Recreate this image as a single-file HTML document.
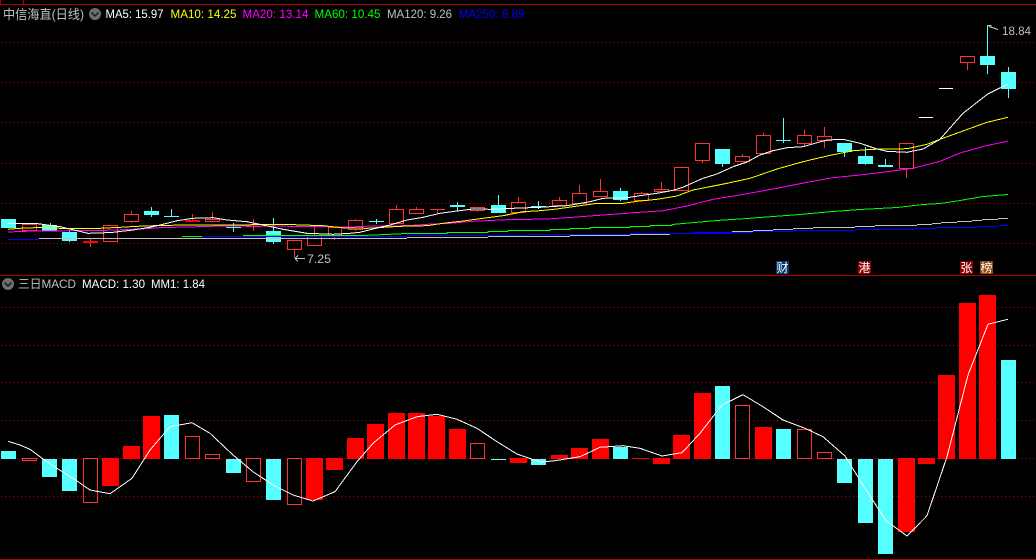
<!DOCTYPE html>
<html><head><meta charset="utf-8"><style>
html,body{margin:0;padding:0;background:#000;width:1036px;height:560px;overflow:hidden}
svg{display:block;position:absolute;left:0;top:0}
.l{fill:none;stroke-width:1;shape-rendering:crispEdges}
.t{font-family:"Liberation Sans","WenQuanYi Zen Hei",sans-serif;font-size:12px}
</style></head><body>
<svg width="1036" height="560" viewBox="0 0 1036 560" xmlns="http://www.w3.org/2000/svg">
<rect width="1036" height="560" fill="#000"/>
<!-- frame -->
<g shape-rendering="crispEdges" fill="#b00000">
<rect x="0" y="4" width="1036" height="1"/><rect x="0" y="275" width="1036" height="1"/><rect x="0" y="559" width="1036" height="1"/>
<rect x="0" y="0" width="1" height="4"/><rect x="23" y="0" width="1" height="4"/>
</g>
<!-- dotted grid -->
<path class="l" stroke="#c00000" stroke-dasharray="1 3" d="M1 42.5H1036M1 82.5H1036M1 122.5H1036M1 163.5H1036M1 203.5H1036M1 243.5H1036M1 307.5H1036M1 345.5H1036M1 382.5H1036M1 420.5H1036M1 458.5H1036M1 496.5H1036"/>
<!-- cyan candle bodies -->
<g fill="#55ffff" shape-rendering="crispEdges">
<rect x="1" y="219" width="15" height="9"/><rect x="42" y="225" width="15" height="6"/><rect x="62" y="232" width="15" height="9"/>
<rect x="144" y="211" width="15" height="4"/><rect x="164" y="216" width="15" height="1"/><rect x="226" y="227" width="15" height="1"/>
<rect x="266" y="231" width="15" height="11"/><rect x="369" y="221" width="15" height="1"/><rect x="450" y="205" width="15" height="2"/>
<rect x="491" y="205" width="15" height="8"/><rect x="531" y="206" width="15" height="1"/><rect x="613" y="191" width="15" height="9"/>
<rect x="715" y="149" width="15" height="15"/><rect x="776" y="140" width="15" height="1"/><rect x="837" y="143" width="15" height="9"/>
<rect x="858" y="156" width="15" height="8"/><rect x="878" y="165" width="15" height="2"/><rect x="980" y="56" width="15" height="9"/><rect x="1001" y="72" width="15" height="17"/>
<rect x="50" y="223" width="1" height="2"/><rect x="69" y="230" width="1" height="12"/><rect x="151" y="207" width="1" height="10"/><rect x="171" y="209" width="1" height="7"/>
<rect x="233" y="223" width="1" height="9"/><rect x="273" y="218" width="1" height="26"/><rect x="376" y="219" width="1" height="5"/><rect x="457" y="202" width="1" height="9"/>
<rect x="498" y="195" width="1" height="18"/><rect x="538" y="201" width="1" height="8"/><rect x="620" y="188" width="1" height="13"/>
<rect x="722" y="164" width="1" height="3"/><rect x="783" y="118" width="1" height="25"/><rect x="844" y="152" width="1" height="5"/><rect x="865" y="147" width="1" height="18"/><rect x="885" y="159" width="1" height="6"/>
<rect x="987" y="25" width="1" height="49"/><rect x="1008" y="67" width="1" height="31"/>
</g>
<!-- red candles -->
<g fill="#ff0000" shape-rendering="crispEdges">
<rect x="83" y="241" width="15" height="2"/><rect x="185" y="220" width="15" height="2"/>
</g>
<path class="l" stroke="#ff3333" d="M22.5 224.5h14v6h-14zM103.5 225.5h14v16h-14zM124.5 214.5h14v7h-14zM131.5 211v3M131.5 222v1M90.5 238v3M90.5 243v4
M192.5 214v6M205.5 219.5h14v2h-14zM212.5 212v7M246 226.5h15M253.5 219v12M287.5 240.5h14v9h-14zM294.5 250v8M307.5 236.5h14v9h-14zM314.5 227v9
M328.5 227.5h13v8h-13zM334.5 236v4M348.5 220.5h14v9h-14zM355.5 219v1M355.5 230v1M389.5 209.5h14v14h-14zM396.5 205v4M409.5 209.5h14v4h-14zM416.5 207v2
M430 209.5h15M437.5 210v3M470.5 207.5h14v3h-14zM477.5 211v1M511.5 202.5h14v10h-14zM518.5 197v5M552.5 200.5h14v5h-14zM559.5 197v3
M572.5 193.5h14v10h-14zM579.5 185v8M593.5 191.5h14v5h-14zM600.5 179v12M634.5 193.5h14v7h-14zM641.5 192v1M654.5 189.5h14v2h-14zM661.5 182v7
M674.5 167.5h14v23h-14zM695.5 143.5h14v17h-14zM702.5 161v2M735.5 156.5h14v5h-14zM742.5 154v2M756.5 135.5h14v18h-14zM763.5 133v2
M797.5 135.5h14v8h-14zM804.5 130v5M804.5 144v2M817.5 136.5h14v4h-14zM824.5 127v9M824.5 141v7M899.5 143.5h14v25h-14zM906.5 169v9
M960.5 56.5h14v6h-14zM967.5 63v7"/>
<path class="l" stroke="#fff" d="M919 117.5h14M939 88.5h14"/>
<!-- gray MA120 -->
<path class="l" stroke="#c0c0c0" d="M39 238.5H407M407 237.5H488M488 236.5H570M570 235.5H630M630 234.5H670M670 233.5H693M693 232.5H732M732 231.5H753M753 230.5H773M773 229.5H793M793 228.5H813M813 227.5H855M855 226.5H875M875 225.5H917M917 224.5H932M932 223.5H941M941 222.5H957M957 221.5H972M972 220.5H982M982 219.5H998M998 218.5H1008"/>
<!-- blue MA250 -->
<path class="l" stroke="#0000ff" d="M8 239.5H39M202 236.5H407M407 235.5H528M528 234.5H630M630 233.5H732M693 232.5H753M753 231.5H793M793 230.5H855M855 229.5H915M915 228.5H935M935 227.5H977M977 226.5H998M998 225.5H1008"/>
<!-- gray redraw where it sits above blue -->
<path class="l" stroke="#c0c0c0" d="M630 234.5H670M732 231.5H753"/>
<!-- green MA60 -->
<path class="l" stroke="#00ff00" d="M182 236.5H202M243 235.5H363L407 233.5H447V232.5H488V231.5H508V230.5H550V229.5H570V228.5H590V227.5H630V226.5H650V225.5H672V224.5L717 220.5L747 218.5L773 216.5L800 214.5L833 211.5L860 209.5L897 207.5L923 204.5L940 203.5L960 200.5L983 196.5L1008 194.5"/>
<!-- magenta MA20 -->
<polyline class="l" stroke="#ff00ff" points="8,232 33,231 100,230.5 140,229 160,227.7 223,226 267,226 350,227 373,226 407,225.7 427,224.3 450,223.3 473,221.3 507,219.7 547,219 573,217.3 607,214.7 640,212.3 663,210.7 687,206 713,199.3 740,195 777,188.3 807,182.3 833,177.7 860,175 887,171.7 913,168.3 940,161.3 960,153 985,146 1008,141"/>
<!-- yellow MA10 -->
<polyline class="l" stroke="#ffff00" points="8,229.3 20,228.3 40,227.5 60,228.3 100,228.3 120,227.3 143,226 183,225 233,225 283,224.3 323,225.7 345,228 367,228.3 383,227.3 407,226 427,225.7 443,223.3 463,221 483,218.3 503,215.7 523,211.7 540,210.7 557,209 573,206.7 597,203.3 623,203.3 640,201 657,199.3 677,196 693,190 710,186.7 727,183.3 750,178.3 777,169 803,161.7 827,156 853,150.7 873,149.3 907,148.7 927,144.3 940,139.3 987,122.3 1008,117.3"/>
<!-- white MA5 -->
<polyline class="l" stroke="#ffffff" points="8,223.3 35,223.3 45,224.7 60,226.7 77,230.7 88,233.3 100,233 113,232.3 133,230 150,227.3 163,224.3 177,220.7 193,218.3 213,217.7 227,220 247,221.7 263,225 283,229.3 307,233.3 333,234.3 350,233.3 360,232.3 373,229 390,225 407,220 423,217.3 440,213.3 457,211 473,209 490,209.3 513,208.3 540,207.3 567,205.7 590,201.7 603,198.3 627,197.7 640,195.7 657,193.3 673,190.3 683,187.3 693,182.7 703,178.3 717,174 733,166.7 747,162 760,155 773,150.7 787,147.7 803,146.7 817,142.7 827,140 843,139.3 860,143.3 877,149 887,151.3 907,152.3 923,149 930,145 940,139.3 963,113.3 987.7,94 1008,84"/>
<!-- labels on chart -->
<path class="l" stroke="#c0c0c0" d="M295 258.5H305M295 258.5L298 255.5M295 258.5L298 261.5M988 25.5h3v2M989 26.5L998 29.5"/>
<text class="t" x="307" y="263" fill="#c0c0c0" textLength="24" lengthAdjust="spacingAndGlyphs">7.25</text>
<text class="t" x="1002" y="35" fill="#c0c0c0" textLength="29" lengthAdjust="spacingAndGlyphs">18.84</text>
<g shape-rendering="crispEdges">
<rect x="776" y="261" width="13" height="13" fill="#003a70"/><rect x="858" y="261" width="13" height="13" fill="#8b0000"/><rect x="960" y="261" width="13" height="13" fill="#8b0000"/><rect x="980" y="261" width="13" height="13" fill="#8b4a0a"/>
</g>
<g class="t" fill="#fff" text-anchor="middle" style="font-size:12px">
<text x="782.5" y="272">财</text><text x="864.5" y="272">港</text><text x="966.5" y="272">张</text><text x="986.5" y="272">榜</text>
</g>
<!-- header text -->
<text class="t" x="3" y="19" fill="#c0c0c0" style="font-size:13px" textLength="81" lengthAdjust="spacingAndGlyphs">中信海直(日线)</text>
<circle cx="95" cy="14" r="6" fill="#6e6e6e"/><path d="M91.5 12.5L95 16L98.5 12.5" fill="none" stroke="#1a1a1a" stroke-width="1.5"/>
<text class="t" x="105.5" y="18" fill="#ffffff" textLength="58" lengthAdjust="spacingAndGlyphs">MA5: 15.97</text>
<text class="t" x="170.5" y="18" fill="#ffff00" textLength="66" lengthAdjust="spacingAndGlyphs">MA10: 14.25</text>
<text class="t" x="242.5" y="18" fill="#ff00ff" textLength="66" lengthAdjust="spacingAndGlyphs">MA20: 13.14</text>
<text class="t" x="314.5" y="18" fill="#00ff00" textLength="66" lengthAdjust="spacingAndGlyphs">MA60: 10.45</text>
<text class="t" x="387" y="18" fill="#c0c0c0" textLength="65" lengthAdjust="spacingAndGlyphs">MA120: 9.26</text>
<text class="t" x="458.5" y="18" fill="#0000ff" textLength="66" lengthAdjust="spacingAndGlyphs">MA250: 8.89</text>
<circle cx="8" cy="284" r="6" fill="#6e6e6e"/><path d="M4.5 282.5L8 286L11.5 282.5" fill="none" stroke="#1a1a1a" stroke-width="1.5"/>
<text class="t" x="18" y="288" fill="#c0c0c0" textLength="58" lengthAdjust="spacingAndGlyphs">三日MACD</text>
<text class="t" x="82" y="288" fill="#ffffff" textLength="63" lengthAdjust="spacingAndGlyphs">MACD: 1.30</text>
<text class="t" x="151" y="288" fill="#ffffff" textLength="54" lengthAdjust="spacingAndGlyphs">MM1: 1.84</text>
<!-- MACD bars -->
<g fill="#ff0000" shape-rendering="crispEdges">
<rect x="102" y="458" width="17" height="28"/><rect x="123" y="446" width="17" height="13"/><rect x="143" y="416" width="17" height="43"/>
<rect x="306" y="458" width="17" height="42"/><rect x="326" y="458" width="17" height="12"/><rect x="347" y="438" width="17" height="21"/>
<rect x="367" y="424" width="17" height="35"/><rect x="388" y="413" width="17" height="46"/><rect x="408" y="413" width="17" height="46"/>
<rect x="428" y="416" width="17" height="43"/><rect x="449" y="429" width="17" height="30"/><rect x="510" y="458" width="17" height="5"/>
<rect x="551" y="455" width="17" height="4"/><rect x="571" y="448" width="17" height="11"/><rect x="592" y="439" width="17" height="20"/>
<rect x="632" y="458" width="17" height="1"/><rect x="653" y="458" width="17" height="6"/><rect x="673" y="435" width="17" height="24"/>
<rect x="694" y="393" width="17" height="66"/><rect x="755" y="427" width="17" height="32"/><rect x="898" y="458" width="17" height="74"/>
<rect x="918" y="458" width="17" height="6"/><rect x="938" y="375" width="17" height="84"/><rect x="959" y="303" width="17" height="156"/><rect x="979" y="295" width="17" height="164"/>
</g>
<g fill="#55ffff" shape-rendering="crispEdges">
<rect x="1" y="451" width="15" height="8"/><rect x="42" y="459" width="15" height="18"/><rect x="62" y="459" width="15" height="32"/>
<rect x="164" y="415" width="15" height="44"/><rect x="226" y="459" width="15" height="14"/><rect x="266" y="459" width="15" height="41"/>
<rect x="491" y="459" width="15" height="1"/><rect x="531" y="459" width="15" height="6"/><rect x="613" y="447" width="15" height="12"/>
<rect x="715" y="386" width="15" height="73"/><rect x="776" y="429" width="15" height="30"/><rect x="837" y="459" width="15" height="24"/>
<rect x="858" y="459" width="15" height="64"/><rect x="878" y="459" width="15" height="95"/><rect x="1001" y="360" width="15" height="99"/>
</g>
<path class="l" stroke="#ff3333" d="M22.5 458.5h14v2h-14zM83.5 458.5h14v44h-14zM185.5 436.5h14v22h-14zM205.5 454.5h14v4h-14zM246.5 458.5h14v23h-14zM287.5 458.5h14v46h-14zM470.5 443.5h14v15h-14zM735.5 405.5h14v53h-14zM797.5 429.5h14v29h-14zM817.5 452.5h14v6h-14z"/>
<!-- MM1 -->
<polyline class="l" stroke="#ffffff" points="8,441.3 20,445 30,449.3 42,458.3 57,468.3 77,481 90,490 97,491.3 110,493.7 132,478.3 150,450 170,426.7 192,422.7 210,433.3 233,455 253,471.7 273,485 293,495 313,501 335,491.7 357,461.7 373,443.3 395,425 417,416.7 437,414.3 457,419.3 477,428.3 497,441.7 517,454 540,462 553,461 580,456.7 600,447.3 623,445.7 640,448.3 662,456 682,452.7 700,433.3 722,405 743,394.7 763,406.7 783,420 805,428.3 823,436.7 845,456 865,488.3 886,520.7 907,536 927,515.7 947,456.7 968,375 988,324.3 1008,319.3"/>
</svg>
</body></html>
